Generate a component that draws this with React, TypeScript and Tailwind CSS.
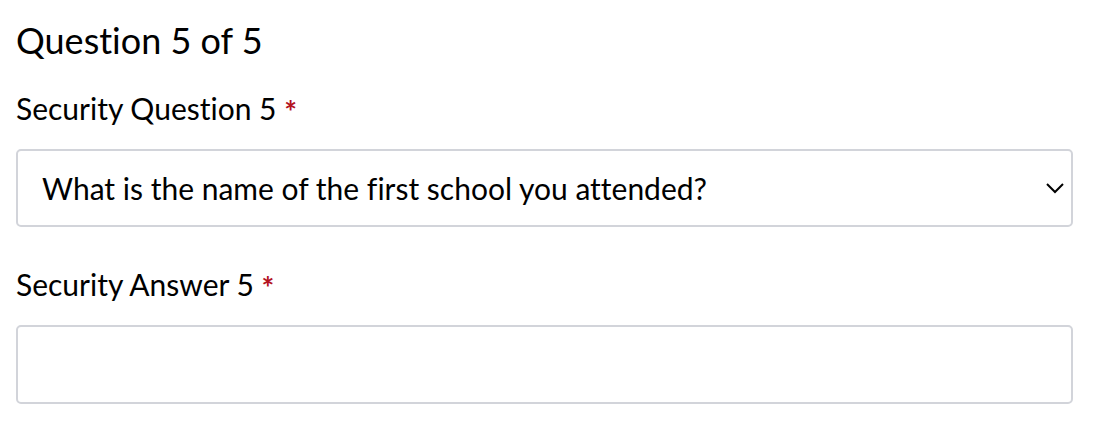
import React from "react";

const SecurityQuestion = () => {
  return (
    <div className="bg-white min-h-screen pl-4 pt-[14px] font-['Lato','Noto_Sans',sans-serif] text-black [font-variant-ligatures:none]">
      <div className="w-[1057px]">
        {/* Step heading */}
        <h2 className="text-[36px] leading-[52px]">Question 5 of 5</h2>

        {/* Question select */}
        <label className="block mt-[24px] text-[30px] leading-[36px]">
          Security Question 5 <span className="relative top-[3px] text-[#b3121f] text-[30px] font-bold">*</span>
        </label>
        <div className="relative mt-[23px] h-[78px] border-2 border-[#d2d4da] rounded-[5px] flex items-center pl-6">
          <span className="text-[30px]">What is the name of the first school you attended?</span>
          <svg
            className="absolute right-[5px] top-1/2 -translate-y-1/2"
            width="22"
            height="14"
            viewBox="0 0 22 14"
            fill="none"
            stroke="black"
            strokeWidth="2"
          >
            <path d="M3 3l8 8 8-8" />
          </svg>
        </div>

        {/* Answer input */}
        <label className="block mt-[39px] text-[30px] leading-[36px]">
          Security Answer 5 <span className="relative top-[3px] text-[#b3121f] text-[30px] font-bold">*</span>
        </label>
        <div className="mt-[23px] h-[79px] border-2 border-[#d2d4da] rounded-[5px]"></div>
      </div>
    </div>
  );
};

export default function App() {
  return <SecurityQuestion />;
}
